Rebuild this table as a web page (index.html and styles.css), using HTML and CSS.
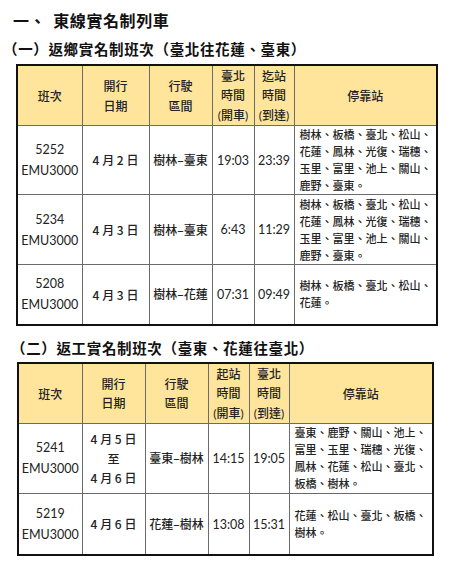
FILE: index.html
```html
<!DOCTYPE html>
<html lang="zh-Hant">
<head>
<meta charset="utf-8">
<link rel="stylesheet" href="styles.css">
</head>
<body>
<div class="page">
  <h1 class="h1"><span class="num">一、</span>東線實名制列車</h1>
  <h2 class="h2 h2a">（一）返鄉實名制班次（臺北往花蓮、臺東）</h2>
  <table class="tbl tbl1">
    <colgroup>
      <col class="c1"><col class="c2"><col class="c3"><col class="c4"><col class="c5"><col class="c6">
    </colgroup>
    <tr class="head">
      <th>班次</th>
      <th>開行<br>日期</th>
      <th>行駛<br>區間</th>
      <th>臺北<br>時間<br><span class="lat">(</span>開車<span class="lat">)</span></th>
      <th>迄站<br>時間<br><span class="lat">(</span>到達<span class="lat">)</span></th>
      <th>停靠站</th>
    </tr>
    <tr class="r69">
      <td class="train">5252<br>EMU3000</td>
      <td class="date">4 月 2 日</td>
      <td class="route">樹林–臺東</td>
      <td class="time">19:03</td>
      <td class="time">23:39</td>
      <td class="stops">樹林、板橋、臺北、松山、花蓮、鳳林、光復、瑞穗、玉里、富里、池上、關山、鹿野、臺東。</td>
    </tr>
    <tr class="r70">
      <td class="train">5234<br>EMU3000</td>
      <td class="date">4 月 3 日</td>
      <td class="route">樹林–臺東</td>
      <td class="time">6:43</td>
      <td class="time">11:29</td>
      <td class="stops">樹林、板橋、臺北、松山、花蓮、鳳林、光復、瑞穗、玉里、富里、池上、關山、鹿野、臺東。</td>
    </tr>
    <tr class="r60">
      <td class="train">5208<br>EMU3000</td>
      <td class="date">4 月 3 日</td>
      <td class="route">樹林–花蓮</td>
      <td class="time">07:31</td>
      <td class="time">09:49</td>
      <td class="stops">樹林、板橋、臺北、松山、花蓮。</td>
    </tr>
  </table>

  <h2 class="h2 h2b">（二）返工實名制班次（臺東、花蓮往臺北）</h2>
  <table class="tbl tbl2">
    <colgroup>
      <col class="d1"><col class="d2"><col class="d3"><col class="d4"><col class="d5"><col class="d6">
    </colgroup>
    <tr class="head">
      <th>班次</th>
      <th>開行<br>日期</th>
      <th>行駛<br>區間</th>
      <th>起站<br>時間<br><span class="lat">(</span>開車<span class="lat">)</span></th>
      <th>臺北<br>時間<br><span class="lat">(</span>到達<span class="lat">)</span></th>
      <th>停靠站</th>
    </tr>
    <tr class="r70">
      <td class="train">5241<br>EMU3000</td>
      <td class="date">4 月 5 日<br>至<br>4 月 6 日</td>
      <td class="route">臺東–樹林</td>
      <td class="time">14:15</td>
      <td class="time">19:05</td>
      <td class="stops">臺東、鹿野、關山、池上、富里、玉里、瑞穗、光復、鳳林、花蓮、松山、臺北、板橋、樹林。</td>
    </tr>
    <tr class="r63">
      <td class="train">5219<br>EMU3000</td>
      <td class="date">4 月 6 日</td>
      <td class="route">花蓮–樹林</td>
      <td class="time">13:08</td>
      <td class="time">15:31</td>
      <td class="stops">花蓮、松山、臺北、板橋、樹林。</td>
    </tr>
  </table>
</div>
</body>
</html>
```

FILE: styles.css
```css
html, body {
  margin: 0;
  padding: 0;
  background: #ffffff;
}

.page {
  width: 450px;
  height: 574px;
  overflow: hidden;
  font-family: "Noto Sans CJK TC", "Noto Sans CJK SC", sans-serif;
  color: #1a1a1a;
}

.h1 {
  margin: 10px 0 0 13px;
  font-size: 16px;
  line-height: 20px;
  font-weight: 700;
  letter-spacing: 0.6px;
  color: #111;
}

.h1 .num {
  margin-right: 7px;
}

.h2 {
  font-size: 14.5px;
  line-height: 20px;
  font-weight: 700;
  letter-spacing: 0.65px;
  color: #111;
}

.h2a {
  margin: 9px 0 0 3px;
}

.h2b {
  margin: 12px 0 0 11px;
}

.tbl {
  border-collapse: collapse;
  table-layout: fixed;
  border: 2px solid #111;
}

.tbl1 {
  margin: 5px 0 0 16px;
  width: 420px;
}

.tbl2 {
  margin: 4px 0 0 17px;
  width: 415px;
}

.c1 { width: 65px; }
.c2 { width: 67px; }
.c3 { width: 63px; }
.c4 { width: 42px; }
.c5 { width: 40px; }
.c6 { width: 143px; }

.d1 { width: 64px; }
.d2 { width: 63px; }
.d3 { width: 63px; }
.d4 { width: 41px; }
.d5 { width: 40px; }
.d6 { width: 144px; }

.tbl th, .tbl td {
  border: 1px solid #6b6b6b;
  padding: 0;
  vertical-align: middle;
  text-align: center;
}

.head {
  height: 60px;
}

.head th {
  background: #fee59b;
  font-size: 12px;
  line-height: 19.4px;
  font-weight: 500;
  color: #222;
}

.lat {
  font-family: "Lato", sans-serif;
  font-weight: 400;
}

.r69 { height: 69px; }
.r70 { height: 70px; }
.r60 { height: 60px; }
.r63 { height: 62px; }

.train {
  font-family: "Lato", "Noto Sans CJK TC", sans-serif;
  font-size: 12.5px;
  line-height: 21px;
  color: #222;
}

.date {
  font-size: 12px;
  line-height: 19.5px;
  font-weight: 500;
  color: #222;
}

.route {
  font-size: 12px;
  line-height: 20px;
  font-weight: 500;
  color: #222;
}

.time {
  font-family: "Lato", sans-serif;
  font-size: 12.5px;
  color: #222;
}

.tbl td.stops {
  text-align: left;
  padding: 0 2px 0 5px;
  font-size: 11px;
  line-height: 17px;
  font-weight: 500;
  color: #222;
}
```
